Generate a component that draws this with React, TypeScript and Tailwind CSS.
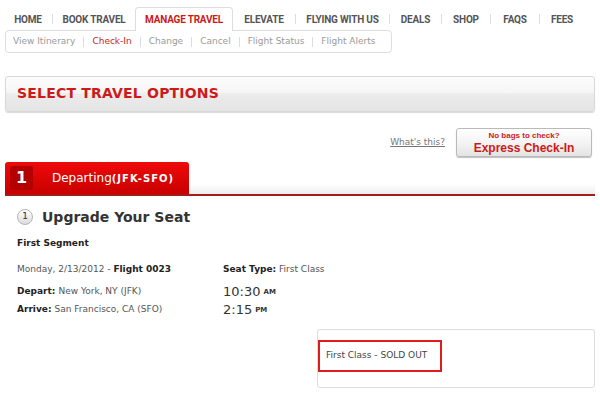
const navItems = [
  { label: "HOME", w: "w-[48px]" },
  { label: "BOOK TRAVEL", w: "w-[82px]" },
  { label: "MANAGE TRAVEL", w: "w-[98px]", active: true },
  { label: "ELEVATE", w: "w-[62px]" },
  { label: "FLYING WITH US", w: "w-[93px]" },
  { label: "DEALS", w: "w-[51px]" },
  { label: "SHOP", w: "w-[48px]" },
  { label: "FAQS", w: "w-[48px]" },
  { label: "FEES", w: "w-[44px]" },
];

const subItems = [
  "View Itinerary",
  "Check-In",
  "Change",
  "Cancel",
  "Flight Status",
  "Flight Alerts",
];

function Sep() {
  return <span className="w-px h-[10px] bg-[#dddddd] shrink-0" />;
}

export default function App() {
  return (
    <div className="w-[600px] h-[416px] bg-white overflow-hidden font-['DejaVu_Sans',sans-serif] text-[#333]">
      {/* Top nav */}
      <div className="flex items-center h-[24px] mt-[7px] pl-[4px] font-['Roboto',sans-serif] text-[10px] font-bold tracking-[-0.2px] text-[#555]">
        {navItems.map((item, i) => {
          const prevActive = i > 0 && navItems[i - 1].active;
          const showSep = i > 0 && !item.active && !prevActive;
          return (
            <div key={item.label} className="flex items-center h-full">
              {showSep && <Sep />}
              {item.active ? (
                <div
                  className={`relative z-10 ${item.w} h-[24px] flex items-center justify-center bg-white border border-b-0 border-[#dddddd] rounded-t-[4px] text-[#cc1a1a]`}
                >
                  {item.label}
                </div>
              ) : (
                <div className={`${item.w} flex items-center justify-center`}>
                  {item.label}
                </div>
              )}
            </div>
          );
        })}
      </div>

      {/* Sub nav */}
      <div className="ml-[5px] mt-[-1px] w-[387px] h-[23px] border border-[#dddddd] rounded-[4px] flex items-center pl-[7px] text-[9px] text-[#9a9a9a]">
        {subItems.map((s, i) => (
          <div key={s} className="flex items-center">
            {i > 0 && <Sep />}
            <span
              className={`${i === 0 ? "pr-[8px]" : "px-[8px]"} ${s === "Check-In" ? "text-[#cc2222]" : ""}`}
            >
              {s}
            </span>
          </div>
        ))}
      </div>

      {/* Section bar */}
      <div className="mx-[5px] mt-[23px] h-[36px] rounded-[3px] border border-[#d9d9d9] shadow-[0_1px_1px_rgba(0,0,0,0.15)] bg-[linear-gradient(to_bottom,#fcfcfc_0%,#f6f6f6_45%,#ececec_50%,#e4e4e4_100%)] flex items-center pl-[11px] pb-[2px]">
        <span className="text-[14px] font-bold text-[#cc1a1a] tracking-[0.2px]">
          SELECT TRAVEL OPTIONS
        </span>
      </div>

      {/* Express check-in */}
      <div className="mt-[16px] flex items-center justify-end pr-[8px] gap-[11px]">
        <span className="text-[9px] text-[#777] underline">What's this?</span>
        <div className="w-[136px] h-[29px] rounded-[3px] border border-[#b9b9b9] shadow-[0_1px_1px_rgba(0,0,0,0.25)] bg-[linear-gradient(to_bottom,#ffffff_0%,#f4f4f4_50%,#e3e3e3_100%)] flex flex-col items-center justify-center font-['Liberation_Sans',sans-serif] font-bold text-[#cc1a1a]">
          <span className="block text-[8px] leading-[10px]">No bags to check?</span>
          <span className="block text-[12px] leading-[14px]">Express Check-In</span>
        </div>
      </div>

      {/* Departing tab */}
      <div className="mt-[5px] mx-[5px]">
        <div className="flex items-end h-[32px]">
          <div className="w-[184px] h-[32px] rounded-t-[3px] bg-[linear-gradient(to_bottom,#ee0a0a,#c80000)] flex items-center pl-[5px]">
            <div className="w-[23px] h-[24px] rounded-[2px] bg-[#b30000] flex items-center justify-center text-white text-[16px] font-bold">
              1
            </div>
            <span className="ml-[19px] text-white text-[12px]">Departing</span>
            <span className="text-white text-[10px] font-bold tracking-[1px]">
              (JFK-SFO)
            </span>
          </div>
          <div className="flex-1 h-[10px] bg-[linear-gradient(to_bottom,#ffffff,#eeeeee)]" />
        </div>
        <div className="h-[2px] bg-[#a51c1c]" />
      </div>

      {/* Upgrade heading */}
      <div className="mt-[13px] ml-[17px] flex items-center h-[16px]">
        <div className="w-[16px] h-[16px] rounded-full border border-[#b5b5b5] bg-[linear-gradient(to_bottom,#ffffff,#dcdcdc)] flex items-center justify-center text-[9px] text-[#333]">
          1
        </div>
        <span className="ml-[9px] text-[14px] font-bold text-[#333]">
          Upgrade Your Seat
        </span>
      </div>

      {/* Segment details */}
      <div className="ml-[17px]">
        <div className="mt-[12px] h-[12px] leading-[12px] text-[9px] font-bold text-[#222]">
          First Segment
        </div>
        <div className="grid grid-cols-[206px_1fr] mt-[14px] text-[9px] text-[#555]">
          <div className="h-[12px] leading-[12px]">
            Monday, 2/13/2012 -{" "}
            <span className="font-bold text-[#222]">Flight 0023</span>
          </div>
          <div className="h-[12px] leading-[12px]">
            <span className="font-bold text-[#222]">Seat Type:</span> First
            Class
          </div>

          <div className="mt-[8px] h-[18px] flex items-center">
            <span className="font-bold text-[#222]">Depart:</span>
            <span className="ml-[3px]">New York, NY (JFK)</span>
          </div>
          <div className="mt-[8px] h-[18px] flex items-center text-[13px] text-[#333]">
            10:30
            <span className="ml-[3px] text-[7px] font-bold">AM</span>
          </div>

          <div className="h-[18px] flex items-center">
            <span className="font-bold text-[#222]">Arrive:</span>
            <span className="ml-[3px]">San Francisco, CA (SFO)</span>
          </div>
          <div className="h-[18px] flex items-center text-[13px] text-[#333]">
            2:15
            <span className="ml-[3px] text-[7px] font-bold">PM</span>
          </div>
        </div>
      </div>

      {/* Seat options box */}
      <div className="ml-[317px] mt-[10px] w-[278px] h-[59px] border border-[#dddddd] rounded-[3px] pt-[10px]">
        <div className="w-[124px] h-[32px] border-2 border-[#e01b1b] flex items-center pl-[6px] text-[9px] text-[#444]">
          First Class - SOLD OUT
        </div>
      </div>
    </div>
  );
}
